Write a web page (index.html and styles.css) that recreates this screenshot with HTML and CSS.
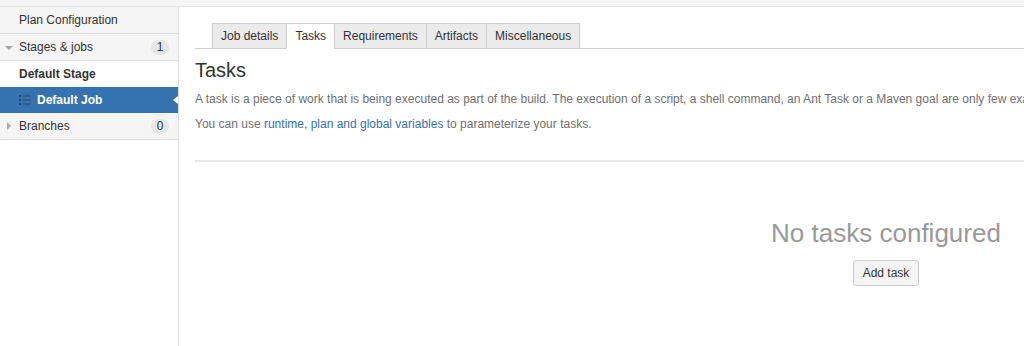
FILE: index.html
```html
<!DOCTYPE html>
<html lang="en">
<head>
    <meta charset="UTF-8">
    <meta name="viewport" content="width=device-width, initial-scale=1.0">
    <title>Tasks</title>
    <link rel="stylesheet" href="styles.css">
</head>
<body>

<!-- Top strip -->
<div class="topbar"></div>

<div class="layout">
    <!-- Sidebar navigation -->
    <div class="sidebar">
        <div class="nav-item">Plan Configuration</div>
        <div class="nav-item">
            <span class="caret caret-down"></span>
            Stages &amp; jobs
            <span class="badge">1</span>
        </div>
        <div class="nav-stage">Default Stage</div>
        <div class="nav-job">
            <svg class="job-icon" width="12" height="10" viewBox="0 0 12 10">
                <rect x="0" y="0" width="2" height="2"/>
                <rect x="0" y="4" width="2" height="2"/>
                <rect x="0" y="8" width="2" height="2"/>
                <rect x="4" y="0.5" width="8" height="1"/>
                <rect x="4" y="4.5" width="8" height="1"/>
                <rect x="4" y="8.5" width="8" height="1"/>
            </svg>
            Default Job
            <span class="notch"></span>
        </div>
        <div class="nav-item">
            <span class="caret caret-right"></span>
            Branches
            <span class="badge">0</span>
        </div>
    </div>

    <!-- Main content -->
    <div class="main">
        <div class="tabs">
            <div class="tab">Job details</div>
            <div class="tab active">Tasks</div>
            <div class="tab">Requirements</div>
            <div class="tab">Artifacts</div>
            <div class="tab">Miscellaneous</div>
        </div>

        <h2>Tasks</h2>
        <p class="clip">A task is a piece of work that is being executed as part of the build. The execution of a script, a shell command, an Ant Task or a Maven goal are only few examples of tasks.</p>
        <p>You can use <a href="#">runtime, plan and global variables</a> to parameterize your tasks.</p>

        <hr class="divider">

        <div class="empty">
            <div class="empty-title">No tasks configured</div>
            <button type="button" class="button">Add task</button>
        </div>
    </div>
</div>

</body>
</html>
```

FILE: styles.css
```css
body {
    font-family: 'Liberation Sans', Arial, sans-serif;
    font-size: 12px;
    color: #333;
    margin: 0;
    padding: 0;
    background-color: #fff;
    overflow: hidden;
    height: 346px;
}

.topbar {
    height: 6px;
    background-color: #f5f5f5;
    border-bottom: 1px solid #e3e3e3;
}

.layout {
    display: flex;
    height: 339px;
}

/* Sidebar */
.sidebar {
    width: 178px;
    flex: none;
    border-right: 1px solid #ddd;
}

.nav-item {
    position: relative;
    height: 26px;
    line-height: 26px;
    padding-left: 19px;
    background-color: #f5f5f5;
    border-bottom: 1px solid #ddd;
}

.nav-stage {
    height: 26px;
    line-height: 26px;
    padding-left: 19px;
    font-weight: bold;
}

.nav-job {
    position: relative;
    display: flex;
    align-items: center;
    gap: 6px;
    height: 26px;
    padding-left: 19px;
    background-color: #3572b0;
    color: #fff;
    font-weight: bold;
}

.job-icon {
    fill: rgba(40, 40, 40, 0.55);
}

.notch {
    position: absolute;
    right: 0;
    top: 9px;
    width: 0;
    height: 0;
    border-top: 4px solid transparent;
    border-bottom: 4px solid transparent;
    border-right: 5px solid #fff;
}

.caret {
    position: absolute;
    width: 0;
    height: 0;
}

.caret-down {
    left: 5px;
    top: 12px;
    border-left: 4px solid transparent;
    border-right: 4px solid transparent;
    border-top: 4px solid #aaa;
}

.caret-right {
    left: 7px;
    top: 9px;
    border-top: 4px solid transparent;
    border-bottom: 4px solid transparent;
    border-left: 4px solid #aaa;
}

.badge {
    position: absolute;
    right: 9px;
    top: 6px;
    min-width: 18px;
    height: 15px;
    line-height: 15px;
    border-radius: 8px;
    background-color: #e6e6e6;
    text-align: center;
    color: #333;
}

/* Main */
.main {
    flex: none;
    width: 1382px;
    padding: 16px 0 0 16px;
}

.tabs {
    display: flex;
    padding-left: 17px;
    border-bottom: 1px solid #ccc;
}

.tab {
    height: 24px;
    line-height: 25px;
    padding: 0 8px;
    margin-right: -1px;
    margin-bottom: -1px;
    background-color: #ebebeb;
    border: 1px solid #ccc;
    color: #333;
}

.tab.active {
    background-color: #fff;
    border-bottom-color: #fff;
}

h2 {
    font-size: 20px;
    font-weight: normal;
    color: #333;
    margin: 9px 0 0;
    line-height: 24px;
}

p {
    margin: 9px 0 0;
    line-height: 16px;
    color: #707070;
}

.clip {
    white-space: nowrap;
    overflow: hidden;
    width: 829px;
}

a {
    color: #3572b0;
    text-decoration: none;
}

.divider {
    border: none;
    border-top: 2px solid #e8e8e8;
    margin: 28px 0 0;
}

.empty {
    text-align: center;
    padding-top: 56px;
}

.empty-title {
    font-size: 26px;
    color: #999;
    line-height: 30px;
}

.button {
    margin-top: 12px;
    font-family: inherit;
    font-size: 12px;
    color: #333;
    background-color: #f5f5f5;
    border: 1px solid #ccc;
    border-radius: 3px;
    height: 26px;
    padding: 0 9px;
}
```
